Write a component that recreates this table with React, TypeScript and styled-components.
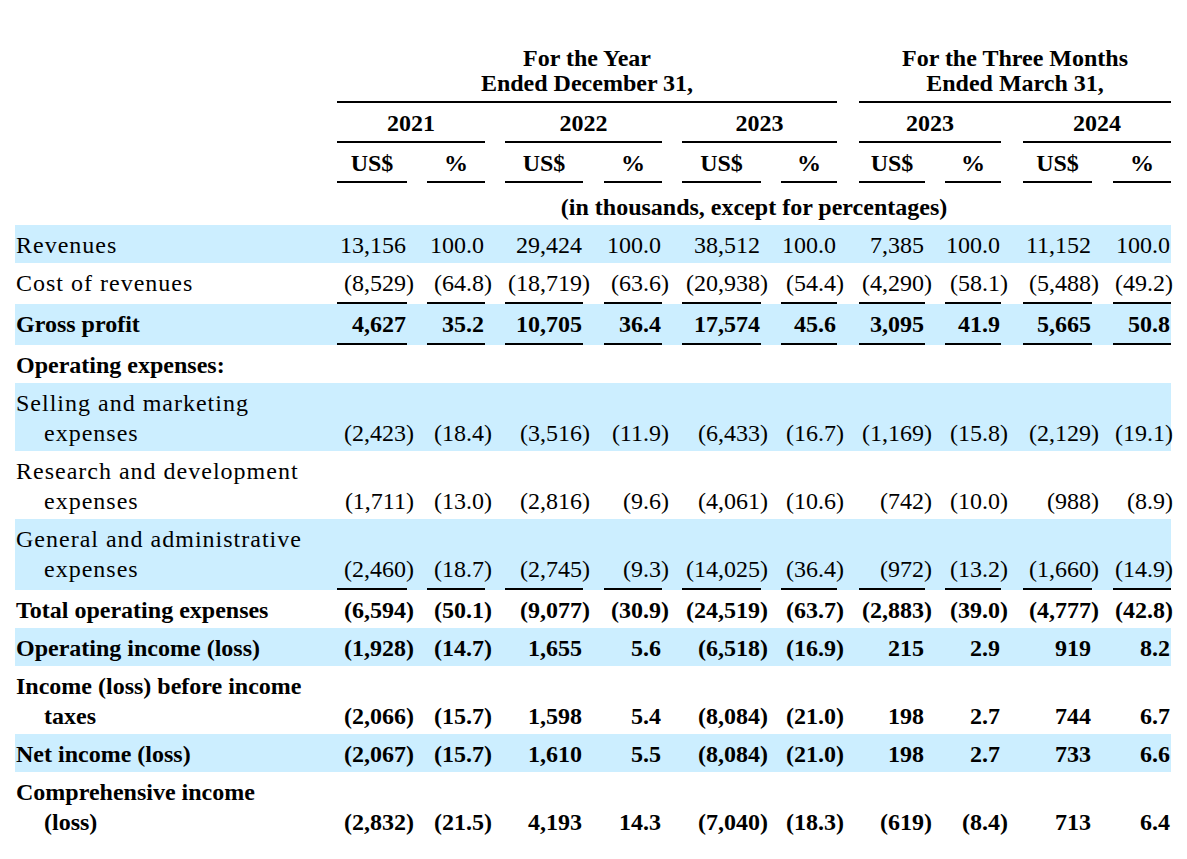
import React from "react";
import styled, { createGlobalStyle } from "styled-components";

const GlobalStyle = createGlobalStyle`
  html, body { margin: 0; padding: 0; background: #ffffff; }
  body {
    font-family: "Liberation Serif", "Times New Roman", serif;
    color: #000000;
  }
`;

const TRACKS =
  "322px 70px 20px 58px 20px 78px 21px 58px 20px 79px 20px 56px 22px 66px 20px 56px 22px 69px 21px 58px";

const Page = styled.div`
  padding: 38px 0 0 15px;
  width: 1156px;
  font-size: 24px;
`;

const Row = styled.div<{ $shade?: boolean }>`
  display: grid;
  grid-template-columns: ${TRACKS};
  background: ${(p) => (p.$shade ? "#cceeff" : "transparent")};
`;

const HeadCell = styled.div<{ $col: number; $span?: number; $rule?: boolean }>`
  grid-column: ${(p) => p.$col} / span ${(p) => p.$span ?? 1};
  padding: 8px 0 5px;
  line-height: 25px;
  font-weight: 700;
  text-align: center;
  white-space: nowrap;
  border-bottom: ${(p) => (p.$rule ? "2px solid #000" : "none")};
`;

const Caption = styled.div`
  grid-column: 2 / -1;
  padding: 12px 0 5px;
  line-height: 25px;
  font-weight: 700;
  text-align: center;
`;

const Label = styled.div<{ $bold?: boolean; $rule?: boolean }>`
  grid-column: 1;
  padding: 5px 0 ${(p) => (p.$rule ? "6px" : "3px")} 1px;
  line-height: 30px;
  font-weight: ${(p) => (p.$bold ? 700 : 400)};
  letter-spacing: ${(p) => (p.$bold ? "0" : "1px")};
  white-space: nowrap;
`;

const LabelLine = styled.span<{ $indent?: boolean }>`
  display: block;
  padding-left: ${(p) => (p.$indent ? "28px" : "0")};
`;

const Value = styled.div<{ $col: number; $bold?: boolean; $rule?: boolean }>`
  grid-column: ${(p) => 2 + 2 * p.$col};
  display: flex;
  justify-content: flex-end;
  align-items: flex-end;
  padding: 5px 1px ${(p) => (p.$rule ? "4px" : "3px")} 0;
  line-height: 30px;
  font-weight: ${(p) => (p.$bold ? 700 : 400)};
  white-space: nowrap;
  border-bottom: ${(p) => (p.$rule ? "2px solid #000" : "none")};
`;

const Paren = styled.span<{ $tight?: boolean }>`
  margin-right: ${(p) => (p.$tight ? "-3px" : "-0.333em")};
`;

type Line = {
  label: string[];
  bold?: boolean;
  shade?: boolean;
  rule?: boolean;
  values: string[];
};

const lines: Line[] = [
  {
    label: ["Revenues"],
    shade: true,
    values: ["13,156", "100.0", "29,424", "100.0", "38,512", "100.0", "7,385", "100.0", "11,152", "100.0"],
  },
  {
    label: ["Cost of revenues"],
    rule: true,
    values: ["(8,529)", "(64.8)", "(18,719)", "(63.6)", "(20,938)", "(54.4)", "(4,290)", "(58.1)", "(5,488)", "(49.2)"],
  },
  {
    label: ["Gross profit"],
    bold: true,
    shade: true,
    rule: true,
    values: ["4,627", "35.2", "10,705", "36.4", "17,574", "45.6", "3,095", "41.9", "5,665", "50.8"],
  },
  { label: ["Operating expenses:"], bold: true, values: [] },
  {
    label: ["Selling and marketing", "expenses"],
    shade: true,
    values: ["(2,423)", "(18.4)", "(3,516)", "(11.9)", "(6,433)", "(16.7)", "(1,169)", "(15.8)", "(2,129)", "(19.1)"],
  },
  {
    label: ["Research and development", "expenses"],
    values: ["(1,711)", "(13.0)", "(2,816)", "(9.6)", "(4,061)", "(10.6)", "(742)", "(10.0)", "(988)", "(8.9)"],
  },
  {
    label: ["General and administrative", "expenses"],
    shade: true,
    rule: true,
    values: ["(2,460)", "(18.7)", "(2,745)", "(9.3)", "(14,025)", "(36.4)", "(972)", "(13.2)", "(1,660)", "(14.9)"],
  },
  {
    label: ["Total operating expenses"],
    bold: true,
    values: ["(6,594)", "(50.1)", "(9,077)", "(30.9)", "(24,519)", "(63.7)", "(2,883)", "(39.0)", "(4,777)", "(42.8)"],
  },
  {
    label: ["Operating income (loss)"],
    bold: true,
    shade: true,
    values: ["(1,928)", "(14.7)", "1,655", "5.6", "(6,518)", "(16.9)", "215", "2.9", "919", "8.2"],
  },
  {
    label: ["Income (loss) before income", "taxes"],
    bold: true,
    values: ["(2,066)", "(15.7)", "1,598", "5.4", "(8,084)", "(21.0)", "198", "2.7", "744", "6.7"],
  },
  {
    label: ["Net income (loss)"],
    bold: true,
    shade: true,
    values: ["(2,067)", "(15.7)", "1,610", "5.5", "(8,084)", "(21.0)", "198", "2.7", "733", "6.6"],
  },
  {
    label: ["Comprehensive income", "(loss)"],
    bold: true,
    values: ["(2,832)", "(21.5)", "4,193", "14.3", "(7,040)", "(18.3)", "(619)", "(8.4)", "713", "6.4"],
  },
];

const years = ["2021", "2022", "2023", "2023", "2024"];

function renderValue(v: string, col: number) {
  if (v.startsWith("(") && v.endsWith(")")) {
    return (
      <>
        <span>{v.slice(0, -1)}</span>
        <Paren $tight={col === 9}>)</Paren>
      </>
    );
  }
  return <span>{v}</span>;
}

export default function App() {
  return (
    <>
      <GlobalStyle />
      <Page>
        <Row>
          <HeadCell $col={2} $span={11} $rule>
            For the Year
            <br />
            Ended December 31,
          </HeadCell>
          <HeadCell $col={14} $span={7} $rule>
            For the Three Months
            <br />
            Ended March 31,
          </HeadCell>
        </Row>
        <Row>
          {years.map((y, i) => (
            <HeadCell key={i} $col={2 + 4 * i} $span={3} $rule>
              {y}
            </HeadCell>
          ))}
        </Row>
        <Row>
          {Array.from({ length: 10 }).map((_, i) => (
            <HeadCell key={i} $col={2 + 2 * i} $rule>
              {i % 2 === 0 ? "US$" : "%"}
            </HeadCell>
          ))}
        </Row>
        <Row>
          <Caption>(in thousands, except for percentages)</Caption>
        </Row>
        {lines.map((ln, r) => (
          <Row key={r} $shade={ln.shade}>
            <Label $bold={ln.bold} $rule={ln.rule}>
              {ln.label.map((t, k) => (
                <LabelLine key={k} $indent={k > 0}>
                  {t}
                </LabelLine>
              ))}
            </Label>
            {ln.values.map((v, c) => (
              <Value key={c} $col={c} $bold={ln.bold} $rule={ln.rule}>
                {renderValue(v, c)}
              </Value>
            ))}
          </Row>
        ))}
      </Page>
    </>
  );
}
